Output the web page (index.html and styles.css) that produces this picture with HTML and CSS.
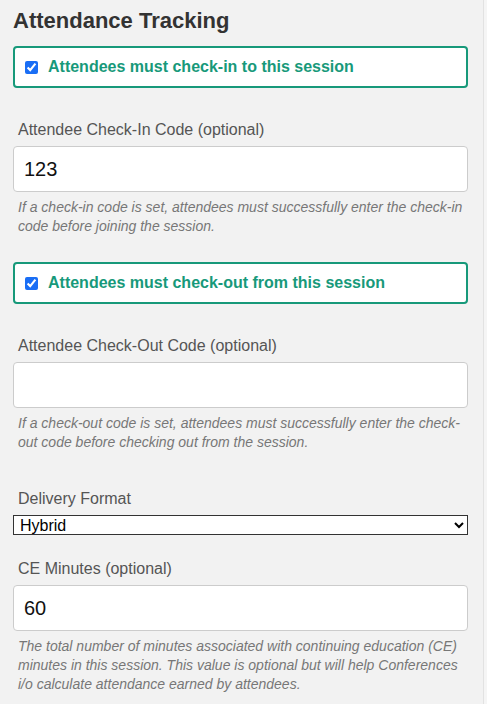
FILE: index.html
```html
<!DOCTYPE html>
<html>
<head>
<meta charset="utf-8">
<link rel="stylesheet" href="styles.css">
</head>
<body>
<div class="panel">
  <h2 class="title">Attendance Tracking</h2>

  <label class="check-box top-check">
    <input type="checkbox" checked>
    <span>Attendees must check-in to this session</span>
  </label>

  <div class="group code-group">
    <label class="field-label">Attendee Check-In Code (optional)</label>
    <input class="text-input" type="text" value="123">
    <p class="help">If a check-in code is set, attendees must successfully enter the check-in code before joining the session.</p>
  </div>

  <label class="check-box next-check">
    <input type="checkbox" checked>
    <span>Attendees must check-out from this session</span>
  </label>

  <div class="group code-group">
    <label class="field-label">Attendee Check-Out Code (optional)</label>
    <input class="text-input" type="text" value="">
    <p class="help">If a check-out code is set, attendees must successfully enter the check-out code before checking out from the session.</p>
  </div>

  <div class="group delivery">
    <label class="field-label">Delivery Format</label>
    <select class="select">
      <option>Hybrid</option>
    </select>
  </div>

  <div class="group ce">
    <label class="field-label">CE Minutes (optional)</label>
    <input class="text-input" type="text" value="60">
    <p class="help">The total number of minutes associated with continuing education (CE) minutes in this session. This value is optional but will help Conferences i/o calculate attendance earned by attendees.</p>
  </div>
</div>
</body>
</html>
```

FILE: styles.css
```css
html, body {
  margin: 0;
  padding: 0;
  background: #f5f5f5;
  font-family: "Liberation Sans", Arial, sans-serif;
}

.panel {
  width: 484px;
  min-height: 704px;
  box-sizing: border-box;
  padding: 0 15px 0 13px;
  border-right: 1px solid #e2e2e2;
  background: #f2f2f2;
}

.title {
  margin: 0;
  padding-top: 8px;
  font-size: 22px;
  line-height: 26px;
  font-weight: bold;
  color: #333;
}

.check-box {
  display: flex;
  align-items: center;
  gap: 10px;
  height: 42px;
  box-sizing: border-box;
  padding: 0 10px;
  background: #fff;
  border: 2px solid #17997a;
  border-radius: 4px;
  color: #17997a;
  font-weight: bold;
  font-size: 16px;
}

.top-check {
  margin-top: 12px;
}

.next-check {
  margin-top: 26px;
}

.check-box input {
  margin: 0;
  width: 13px;
  height: 13px;
  accent-color: #1a6ef5;
}

.code-group {
  margin-top: 33px;
}

.field-label {
  display: block;
  margin-left: 5px;
  margin-bottom: 7px;
  font-size: 16px;
  line-height: 18px;
  color: #555;
}

.text-input {
  display: block;
  width: 100%;
  height: 46px;
  box-sizing: border-box;
  border: 1px solid #ccc;
  border-radius: 4px;
  background: #fff;
  padding: 0 10px;
  font-family: "Liberation Sans", Arial, sans-serif;
  font-size: 20px;
  color: #111;
  outline: none;
}

.help {
  margin: 6px 0 0 5px;
  font-size: 14px;
  line-height: 19px;
  font-style: italic;
  color: #777;
}

.delivery {
  margin-top: 38px;
}

.select {
  display: block;
  width: 100%;
  height: 20px;
  box-sizing: border-box;
  border: 1px solid #333;
  border-radius: 0;
  background: #fff;
  font-family: "Liberation Sans", Arial, sans-serif;
  font-size: 16px;
  line-height: 18px;
  color: #000;
  padding: 0 2px;
}

.ce {
  margin-top: 25px;
}
```
